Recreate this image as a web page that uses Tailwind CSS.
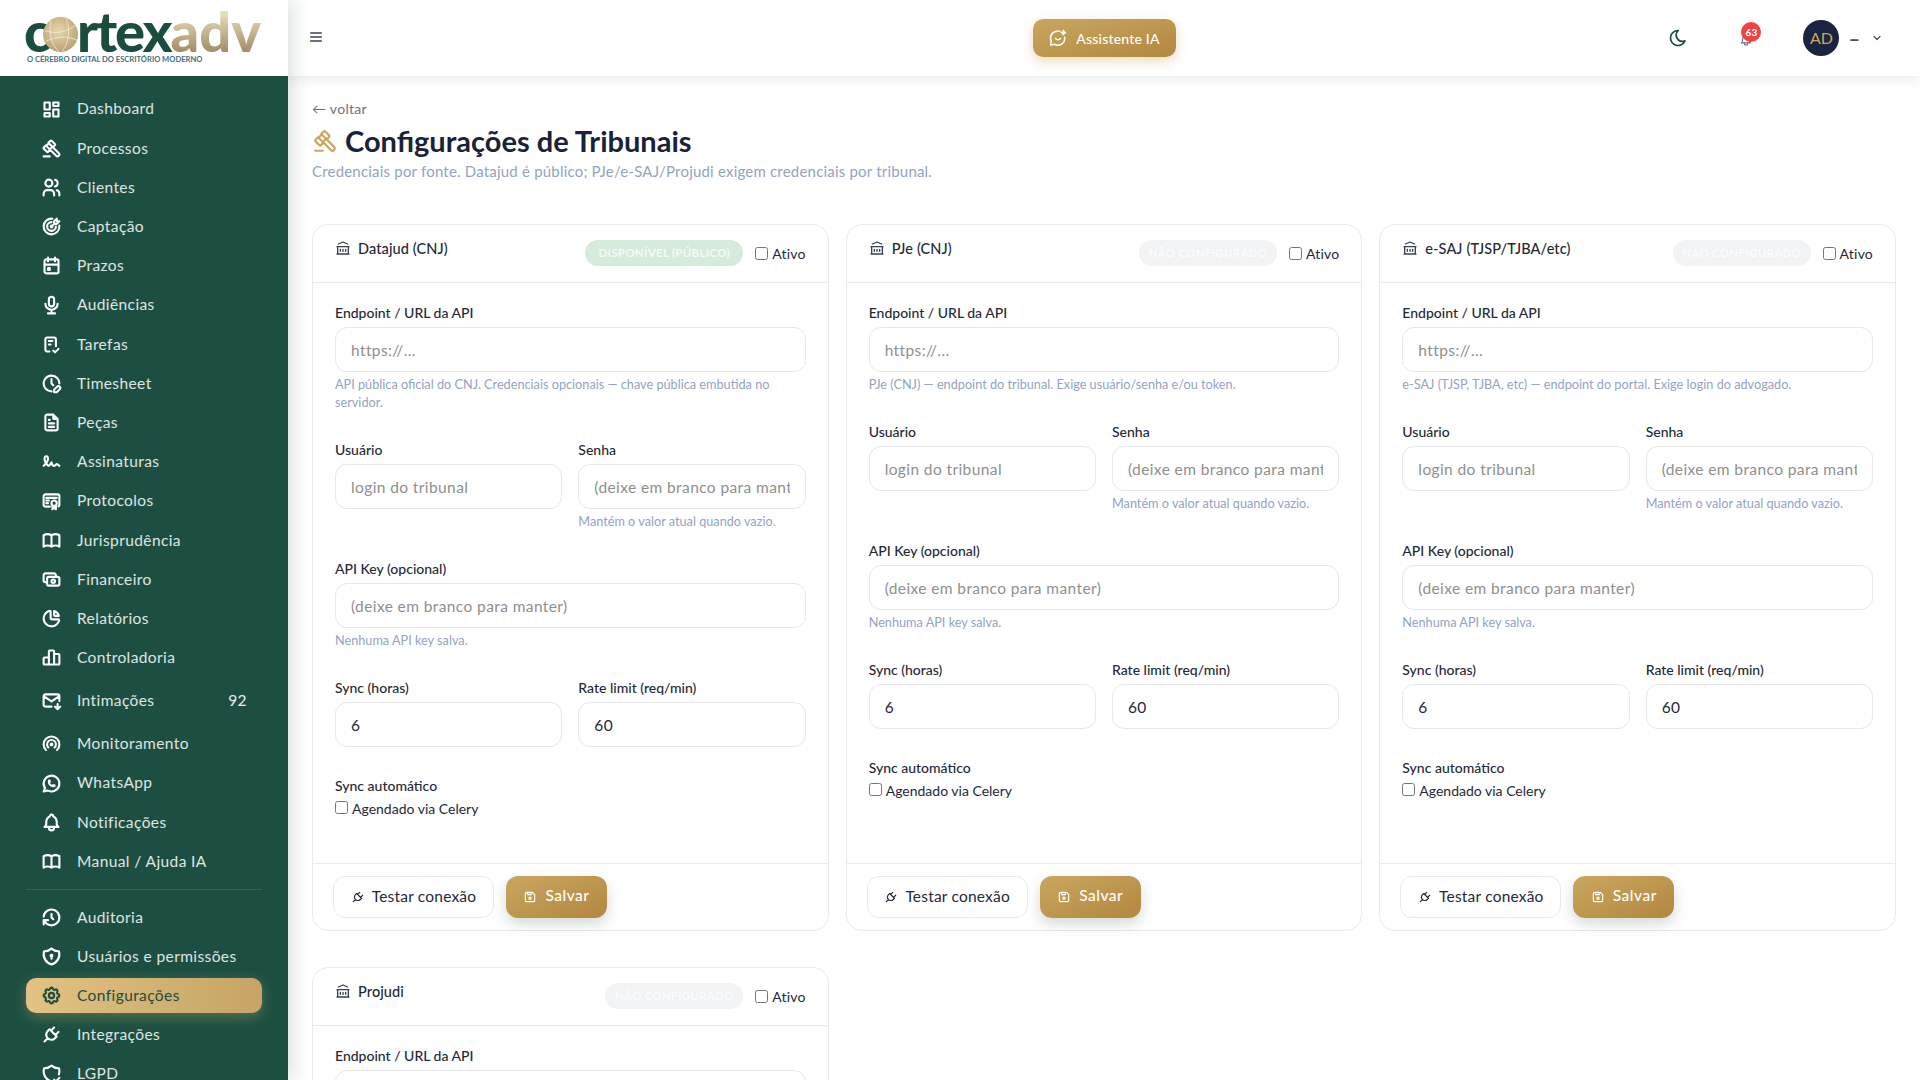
<!DOCTYPE html>
<html lang="pt-BR">
<head>
    <meta charset="UTF-8">
    <title>Configurações de Tribunais</title>
    <script src="https://cdn.jsdelivr.net/npm/@tailwindcss/browser@4"></script>
</head>
<body class="h-screen overflow-hidden flex bg-white text-[#1f2937] font-['Lato',sans-serif]">

    <aside class="w-[288px] shrink-0 h-screen flex flex-col relative z-20 shadow-[4px_0_18px_rgba(27,77,62,0.18)]">
        <div class="h-[76px] shrink-0 bg-white pl-[24px] pt-[8px]">
            <div class="flex items-end h-[44px] font-black text-[56px]">
                <span class="text-[#1b4d3e] leading-[44px] -mb-[1px]">c</span>
                <svg class="w-[35px] h-[35px] shrink-0 relative z-10 -ml-[8px] -mr-[1px]" viewBox="0 0 36 36" fill="none">
                    <defs><radialGradient id="gl" cx="45%" cy="40%" r="70%"><stop offset="0%" stop-color="#e6d6ac"/><stop offset="100%" stop-color="#b39c70"/></radialGradient></defs>
                    <circle cx="18" cy="18" r="18" fill="url(#gl)"/>
                    <path d="M2 14c10 4 22 2 32-6M8 4c-2 12 0 24 8 31M24 2c4 10 3 24-4 33M3 25c10-5 22-6 32-1" stroke="#f5eeda" stroke-width="0.8"/>
                </svg>
                <span class="text-[#1b4d3e] leading-[44px] -mb-[1px] tracking-[-2px]">rtex</span>
                <span class="leading-[44px] -mb-[1px] bg-gradient-to-b from-[#f0e6c4] to-[#a08b66] bg-clip-text text-transparent">adv</span>
            </div>
            <div class="text-[7.6px] font-bold text-[#45707a] ml-[3px] mt-[2px] leading-[10px] whitespace-nowrap">O CÉREBRO DIGITAL DO ESCRITÓRIO MODERNO</div>
        </div>
        <nav id="nav" class="flex-1 bg-[#1c4f41] px-[26px] pt-[15.5px] overflow-hidden"></nav>
    </aside>

    <div class="flex-1 min-w-0 flex flex-col h-screen">
        <header class="h-[76px] shrink-0 bg-white relative z-10 shadow-[0_2px_12px_rgba(27,77,62,0.12)] flex items-center pl-[20px] pr-[37px]">
            <div class="flex-1">
                <svg class="w-[16px] h-[16px] -mt-[2px] text-[#374151]" viewBox="0 0 24 24" fill="none" stroke="currentColor" stroke-width="2" stroke-linecap="round"><path d="M4 6h16M4 12h16M4 18h16"/></svg>
            </div>
            <button class="h-[38px] w-[143px] ml-[17px] flex items-center justify-center gap-[8px] rounded-[10px] text-white text-[14px] font-medium tracking-[0.2px] bg-gradient-to-br from-[#c9a75f] to-[#b3873f] shadow-[0_4px_12px_rgba(201,167,95,0.4)]">
                <svg class="w-[20px] h-[20px]" viewBox="0 0 24 24" fill="none" stroke="currentColor" stroke-width="1.8" stroke-linecap="round" stroke-linejoin="round"><path d="M14 4h-3a8 8 0 0 0-7 11.8L3 20.5l5-1a8 8 0 0 0 12-7V11"/><path d="M9 12.5a3.5 3.5 0 0 0 6 0"/><path d="M18.5 3l.8 1.7 1.7.8-1.7.8-.8 1.7-.8-1.7-1.7-.8 1.7-.8z" fill="currentColor"/></svg>
                Assistente IA
            </button>
            <div class="flex-1 flex items-center justify-end">
                <svg class="w-[20px] h-[20px] text-[#1b4d3e] mr-[51px]" viewBox="0 0 24 24" fill="none" stroke="currentColor" stroke-width="2" stroke-linecap="round" stroke-linejoin="round"><path d="M12 3c.132 0 .263 0 .393 0a7.5 7.5 0 0 0 7.92 12.446a9 9 0 1 1 -8.313 -12.454z"/></svg>
                <div class="relative w-[16px] h-[16px] mr-[48px]">
                    <svg class="w-[14px] h-[14px] mt-[3px] text-[#64748b]" viewBox="0 0 24 24" fill="none" stroke="currentColor" stroke-width="2" stroke-linecap="round" stroke-linejoin="round"><path d="M10 5a2 2 0 1 1 4 0a7 7 0 0 1 4 6v3a4 4 0 0 0 2 3h-16a4 4 0 0 0 2 -3v-3a7 7 0 0 1 4 -6"/><path d="M9 17v1a3 3 0 0 0 6 0v-1"/></svg>
                    <span class="absolute -top-[8px] left-[2px] w-[20px] h-[20px] rounded-full bg-[#ef4444] text-white text-[10px] font-bold flex items-center justify-center">63</span>
                </div>
                <div class="w-[36px] h-[36px] rounded-full bg-[#1a2340] text-[#c9a75f] text-[16px] flex items-center justify-center">AD</div>
                <span class="ml-[9px] text-[#4b5563] text-[20px] leading-none font-bold">–</span>
                <svg class="w-[12px] h-[12px] ml-[11px] text-[#4b5563]" viewBox="0 0 24 24" fill="none" stroke="currentColor" stroke-width="2.5" stroke-linecap="round" stroke-linejoin="round"><path d="M6 9l6 6l6 -6"/></svg>
            </div>
        </header>

        <main class="flex-1 overflow-hidden px-[24px] pt-[23px]">
            <a class="block text-[14px] leading-[20px] text-[#6b7280] tracking-[0.3px]">← voltar</a>
            <h1 class="flex items-center gap-[7px] mt-[2px] h-[40px] text-[29px] font-bold text-[#1a2238] leading-[40px]">
                <svg class="w-[26px] h-[26px] text-[#c9a75f]" viewBox="0 0 24 24" fill="none" stroke="currentColor" stroke-width="2" stroke-linecap="round" stroke-linejoin="round"><path d="M13 10l7.383 7.418c.823 .82 .823 2.148 0 2.967a2.11 2.11 0 0 1 -2.976 0l-7.407 -7.385"/><path d="M6 9l4 4"/><path d="M13 10l-4 -4"/><path d="M3 21h7"/><path d="M6.793 15.793l-3.586 -3.586a1 1 0 0 1 0 -1.414l2.293 -2.293l.5 .5l3 -3l-.5 -.5l2.293 -2.293a1 1 0 0 1 1.414 0l3.586 3.586a1 1 0 0 1 0 1.414l-2.293 2.293l-.5 -.5l-3 3l.5 .5l-2.293 2.293a1 1 0 0 1 -1.414 0z"/></svg>
                Configurações de Tribunais
            </h1>
            <p class="text-[15px] leading-[22px] -mt-[1px] text-[#94a3c4] tracking-[0.2px]">Credenciais por fonte. Datajud é público; PJe/e-SAJ/Projudi exigem credenciais por tribunal.</p>
            <div id="cards" class="grid grid-cols-3 gap-x-[17px] gap-y-[36px] mt-[42px]"></div>
        </main>
    </div>

    <script>
        const icons = {
            dashboard: "M4 4h6v8h-6z M4 16h6v4h-6z M14 12h6v8h-6z M14 4h6v4h-6z",
            gavel: "M13 10l7.383 7.418c.823 .82 .823 2.148 0 2.967a2.11 2.11 0 0 1 -2.976 0l-7.407 -7.385 M6 9l4 4 M13 10l-4 -4 M3 21h7 M6.793 15.793l-3.586 -3.586a1 1 0 0 1 0 -1.414l2.293 -2.293l.5 .5l3 -3l-.5 -.5l2.293 -2.293a1 1 0 0 1 1.414 0l3.586 3.586a1 1 0 0 1 0 1.414l-2.293 2.293l-.5 -.5l-3 3l.5 .5l-2.293 2.293a1 1 0 0 1 -1.414 0z",
            users: "M9 7m-4 0a4 4 0 1 0 8 0a4 4 0 1 0 -8 0 M3 21v-2a4 4 0 0 1 4 -4h4a4 4 0 0 1 4 4v2 M16 3.13a4 4 0 0 1 0 7.75 M21 21v-2a4 4 0 0 0 -3 -3.85",
            target: "M12 12m-1 0a1 1 0 1 0 2 0a1 1 0 1 0 -2 0 M12 7a5 5 0 1 0 5 5 M13 3.055a9 9 0 1 0 7.941 7.945 M15 6v3h3l3 -3h-3v-3z M15 9l-3 3",
            calendar: "M4 5m0 2a2 2 0 0 1 2 -2h12a2 2 0 0 1 2 2v12a2 2 0 0 1 -2 2h-12a2 2 0 0 1 -2 -2z M16 3l0 4 M8 3l0 4 M4 11l16 0 M8 15h2v2h-2z",
            mic: "M9 2m0 3a3 3 0 0 1 3 -3h0a3 3 0 0 1 3 3v5a3 3 0 0 1 -3 3h0a3 3 0 0 1 -3 -3z M5 10a7 7 0 0 0 14 0 M8 21l8 0 M12 17l0 4",
            checklist: "M9.615 20h-2.615a2 2 0 0 1 -2 -2v-12a2 2 0 0 1 2 -2h8a2 2 0 0 1 2 2v8 M14 19l2 2l4 -4 M9 8h4 M9 12h2",
            clockEdit: "M21 12a9 9 0 1 0 -9.972 8.948c.32 .034 .644 .052 .972 .052 M12 7v5l2 2 M18.42 15.61a2.1 2.1 0 0 1 2.97 2.97l-3.39 3.42h-3v-3z",
            file: "M14 3v4a1 1 0 0 0 1 1h4 M17 21h-10a2 2 0 0 1 -2 -2v-14a2 2 0 0 1 2 -2h7l5 5v11a2 2 0 0 1 -2 2z M9 9l1 0 M9 13l6 0 M9 17l6 0",
            signature: "M3 17c3.333 -3.333 5 -6 5 -8c0 -3 -1 -3 -2 -3s-2.032 1.085 -2 3c.034 2.048 1.658 4.877 2.5 6c1.5 2 2.5 2.5 3.5 1l2 -3c.333 2.667 1.333 4 3 4c.53 0 2.639 -2 3 -2c.517 0 1.517 .667 3 2",
            certificate: "M15 15m-3 0a3 3 0 1 0 6 0a3 3 0 1 0 -6 0 M13 17.5v4.5l2 -1.5l2 1.5v-4.5 M10 19h-5a2 2 0 0 1 -2 -2v-10c0 -1.1 .9 -2 2 -2h14a2 2 0 0 1 2 2v10a2 2 0 0 1 -1 1.73 M6 9l12 0 M6 12l3 0 M6 15l2 0",
            book: "M3 19a9 9 0 0 1 9 0a9 9 0 0 1 9 0 M3 6a9 9 0 0 1 9 0a9 9 0 0 1 9 0 M3 6l0 13 M12 6l0 13 M21 6l0 13",
            cash: "M7 9m0 2a2 2 0 0 1 2 -2h10a2 2 0 0 1 2 2v6a2 2 0 0 1 -2 2h-10a2 2 0 0 1 -2 -2z M14 14m-2 0a2 2 0 1 0 4 0a2 2 0 1 0 -4 0 M17 9v-2a2 2 0 0 0 -2 -2h-10a2 2 0 0 0 -2 2v6a2 2 0 0 0 2 2h2",
            pie: "M10 3.2a9 9 0 1 0 10.8 10.8a1 1 0 0 0 -1 -1h-6.8a2 2 0 0 1 -2 -2v-7a.9 .9 0 0 0 -1 -.8 M15 3.5a9 9 0 0 1 5.5 5.5h-4.5a1 1 0 0 1 -1 -1v-4.5",
            bars: "M3 13a1 1 0 0 1 1 -1h4a1 1 0 0 1 1 1v6a1 1 0 0 1 -1 1h-4a1 1 0 0 1 -1 -1z M15 9a1 1 0 0 1 1 -1h4a1 1 0 0 1 1 1v10a1 1 0 0 1 -1 1h-4a1 1 0 0 1 -1 -1z M9 5a1 1 0 0 1 1 -1h4a1 1 0 0 1 1 1v14a1 1 0 0 1 -1 1h-4a1 1 0 0 1 -1 -1z M4 20h14",
            mail: "M12 19h-7a2 2 0 0 1 -2 -2v-10a2 2 0 0 1 2 -2h14a2 2 0 0 1 2 2v5.5 M3 7l9 6l9 -6 M19 16v6 M22 19l-3 3l-3 -3",
            radar: "M18.364 19.364a9 9 0 1 0 -12.728 0 M15.536 16.536a5 5 0 1 0 -7.072 0 M12 13m-1 0a1 1 0 1 0 2 0a1 1 0 1 0 -2 0",
            whatsapp: "M3 21l1.65 -3.8a9 9 0 1 1 3.4 2.9l-5.05 .9 M9 10a.5 .5 0 0 0 1 0v-1a.5 .5 0 0 0 -1 0v1a5 5 0 0 0 5 5h1a.5 .5 0 0 0 0 -1h-1a.5 .5 0 0 0 0 1",
            bell: "M10 5a2 2 0 1 1 4 0a7 7 0 0 1 4 6v3a4 4 0 0 0 2 3h-16a4 4 0 0 0 2 -3v-3a7 7 0 0 1 4 -6 M9 17v1a3 3 0 0 0 6 0v-1",
            history: "M12 8l0 4l2 2 M3.05 11a9 9 0 1 1 .5 4m-.5 5v-5h5",
            shieldLock: "M12 3a12 12 0 0 0 8.5 3a12 12 0 0 1 -8.5 15a12 12 0 0 1 -8.5 -15a12 12 0 0 0 8.5 -3 M12 11m-1 0a1 1 0 1 0 2 0a1 1 0 1 0 -2 0 M12 12l0 2.5",
            settings: "M10.325 4.317c.426 -1.756 2.924 -1.756 3.35 0a1.724 1.724 0 0 0 2.573 1.066c1.543 -.94 3.31 .826 2.37 2.37a1.724 1.724 0 0 0 1.065 2.572c1.756 .426 1.756 2.924 0 3.35a1.724 1.724 0 0 0 -1.066 2.573c.94 1.543 -.826 3.31 -2.37 2.37a1.724 1.724 0 0 0 -2.572 1.065c-.426 1.756 -2.924 1.756 -3.35 0a1.724 1.724 0 0 0 -2.573 -1.066c-1.543 .94 -3.31 -.826 -2.37 -2.37a1.724 1.724 0 0 0 -1.065 -2.572c-1.756 -.426 -1.756 -2.924 0 -3.35a1.724 1.724 0 0 0 1.066 -2.573c-.94 -1.543 .826 -3.31 2.37 -2.37c1 .608 2.296 .07 2.572 -1.065z M9 12a3 3 0 1 0 6 0a3 3 0 0 0 -6 0",
            plug: "M9.785 6l8.215 8.215l-2.054 2.054a5.81 5.81 0 1 1 -8.215 -8.215l2.054 -2.054z M4 20l3.5 -3.5 M15 4l-3.5 3.5 M20 9l-3.5 3.5",
            shieldCheck: "M11.46 20.846a12 12 0 0 1 -7.96 -14.846a12 12 0 0 0 8.5 -3a12 12 0 0 0 8.5 3a12 12 0 0 1 -.09 7.06 M15 19l2 2l4 -4",
            bank: "M3 21l18 0 M3 10l18 0 M5 6l7 -3l7 3 M4 10l0 11 M20 10l0 11 M8 14l0 3 M12 14l0 3 M16 14l0 3",
            floppy: "M6 4h10l4 4v10a2 2 0 0 1 -2 2h-12a2 2 0 0 1 -2 -2v-12a2 2 0 0 1 2 -2 M12 14m-2 0a2 2 0 1 0 4 0a2 2 0 1 0 -4 0 M14 4l0 4l-6 0l0 -4"
        };

        function icon(name, cls, sw = 2) {
            return `<svg class="${cls}" viewBox="0 0 24 24" fill="none" stroke="currentColor" stroke-width="${sw}" stroke-linecap="round" stroke-linejoin="round"><path d="${icons[name]}"/></svg>`;
        }

        const menu = [
            ["dashboard", "Dashboard"], ["gavel", "Processos"], ["users", "Clientes"], ["target", "Captação"],
            ["calendar", "Prazos"], ["mic", "Audiências"], ["checklist", "Tarefas"], ["clockEdit", "Timesheet"],
            ["file", "Peças"], ["signature", "Assinaturas"], ["certificate", "Protocolos"], ["book", "Jurisprudência"],
            ["cash", "Financeiro"], ["pie", "Relatórios"], ["bars", "Controladoria"], ["mail", "Intimações", "92"],
            ["radar", "Monitoramento"], ["whatsapp", "WhatsApp"], ["bell", "Notificações"], ["book", "Manual / Ajuda IA"],
            "divider",
            ["history", "Auditoria"], ["shieldLock", "Usuários e permissões"], ["settings", "Configurações", null, true],
            ["plug", "Integrações"], ["shieldCheck", "LGPD"]
        ];

        document.getElementById('nav').innerHTML = menu.map(m => {
            if (m === "divider") return `<div class="h-px bg-white/10 mt-[10px] mb-[9.5px]"></div>`;
            const [ic, label, badge, active] = m;
            if (active) {
                return `<a class="flex items-center h-[35.2px] mb-[4px] pl-[16px] gap-[15px] rounded-[10px] text-[15.5px] tracking-[0.4px] text-[#1b4d3e] bg-gradient-to-r from-[#e2c384] to-[#c5a466] shadow-[0_4px_14px_rgba(226,195,132,0.3)]">${icon(ic, "w-[21px] h-[21px] shrink-0 -ml-[1px]", 2.4)}<span>${label}</span></a>`;
            }
            const rowHeight = badge ? "h-[43px]" : "h-[35.2px]";
            return `<a class="flex items-center ${rowHeight} mb-[4px] pl-[16px] pr-[15px] gap-[15px] rounded-[10px] text-[15.5px] tracking-[0.4px] text-white/85">${icon(ic, "w-[21px] h-[21px] shrink-0 -ml-[1px] text-white", 2.4)}<span class="flex-1">${label}</span>${badge ? `<span class="text-white/90">${badge}</span>` : ""}</a>`;
        }).join("");

        const tribunais = [
            { nome: "Datajud (CNJ)", status: "DISPONÍVEL (PÚBLICO)", ok: true, ajuda: "API pública oficial do CNJ. Credenciais opcionais — chave pública embutida no servidor." },
            { nome: "PJe (CNJ)", status: "NÃO CONFIGURADO", ok: false, ajuda: "PJe (CNJ) — endpoint do tribunal. Exige usuário/senha e/ou token." },
            { nome: "e-SAJ (TJSP/TJBA/etc)", status: "NÃO CONFIGURADO", ok: false, ajuda: "e-SAJ (TJSP, TJBA, etc) — endpoint do portal. Exige login do advogado." },
            { nome: "Projudi", status: "NÃO CONFIGURADO", ok: false, ajuda: "Projudi — endpoint do tribunal." }
        ];

        const labelCls = "block text-[14px] leading-[20px] mb-[4px] font-medium text-[#1f2937]";
        const inputCls = "block w-full h-[45px] px-[15px] rounded-[12px] border border-[#e5e7eb] bg-white text-[15.5px] tracking-[0.4px] text-[#1f2937] placeholder:text-[#8f8f8f] outline-none";
        const helpCls = "mt-[3px] text-[12.7px] leading-[18px] text-[#94a3c4]";

        function field(label, attrs, help) {
            return `<div>
                <label class="${labelCls}">${label}</label>
                <input class="${inputCls}" ${attrs}>
                ${help ? `<p class="${helpCls}">${help}</p>` : ""}
            </div>`;
        }

        document.getElementById('cards').innerHTML = tribunais.map(t => `
            <section class="flex flex-col rounded-[16px] border border-[#e8eaed] bg-white">
                <div class="h-[58px] shrink-0 border-b border-[#e8eaed] flex justify-between items-start pl-[22px] pr-[22px] pt-[15px]">
                    <div class="flex items-center gap-[7px] -mt-[1px] text-[14.5px] leading-[20px] font-medium tracking-[0.1px] text-[#1f2937]">
                        ${icon("bank", "w-[16px] h-[16px] -mt-[2px] text-[#374151]")}${t.nome}
                    </div>
                    <div class="flex items-center h-[26px] gap-[12px] text-[14px] tracking-[0.2px]">
                        <span class="h-[26px] flex items-center justify-center rounded-full text-[11.5px] font-bold tracking-[0.3px] text-white/75 ${t.ok ? "w-[158px] bg-[#d5ecdc]" : "w-[138px] bg-[#f1f3f5]"}">${t.status}</span>
                        <label class="flex items-center gap-[4px]"><input type="checkbox" class="w-[13px] h-[13px]">Ativo</label>
                    </div>
                </div>
                <div class="flex-1 px-[22px] pt-[20px] pb-[44px] flex flex-col gap-[29px]">
                    ${field("Endpoint / URL da API", 'placeholder="https://..."', t.ajuda)}
                    <div class="grid grid-cols-2 gap-x-[16px]">
                        ${field("Usuário", 'placeholder="login do tribunal"')}
                        ${field("Senha", 'placeholder="(deixe em branco para manter)"', "Mantém o valor atual quando vazio.")}
                    </div>
                    ${field("API Key (opcional)", 'placeholder="(deixe em branco para manter)"', "Nenhuma API key salva.")}
                    <div class="grid grid-cols-2 gap-x-[16px]">
                        ${field("Sync (horas)", 'value="6"')}
                        ${field("Rate limit (req/min)", 'value="60"')}
                    </div>
                    <div>
                        <div class="text-[14px] leading-[20px] font-medium mb-[2px]">Sync automático</div>
                        <label class="flex items-start gap-[4px] text-[14px] leading-[20px]"><input type="checkbox" class="w-[13px] h-[13px] mt-[3px]"><span class="mt-[1px]">Agendado via Celery</span></label>
                    </div>
                </div>
                <div class="h-[67px] shrink-0 border-t border-[#e8eaed] flex items-start pl-[20px] pt-[12px] gap-[12px]">
                    <button class="h-[42px] w-[161px] flex items-center justify-center gap-[7px] rounded-[12px] border border-[#e8eaed] bg-white text-[15.5px] tracking-[0.2px] text-[#1f2937]">${icon("plug", "w-[14px] h-[14px]")}Testar conexão</button>
                    <button class="h-[42px] w-[101px] flex items-center justify-center gap-[8px] rounded-[12px] text-white text-[15.5px] font-medium tracking-[0.5px] bg-gradient-to-br from-[#c9a75f] to-[#b3873f] shadow-[0_6px_14px_rgba(27,77,62,0.2)]">${icon("floppy", "w-[14px] h-[14px]")}<span class="-mt-[2px]">Salvar</span></button>
                </div>
            </section>`).join("");
    </script>
</body>
</html>
